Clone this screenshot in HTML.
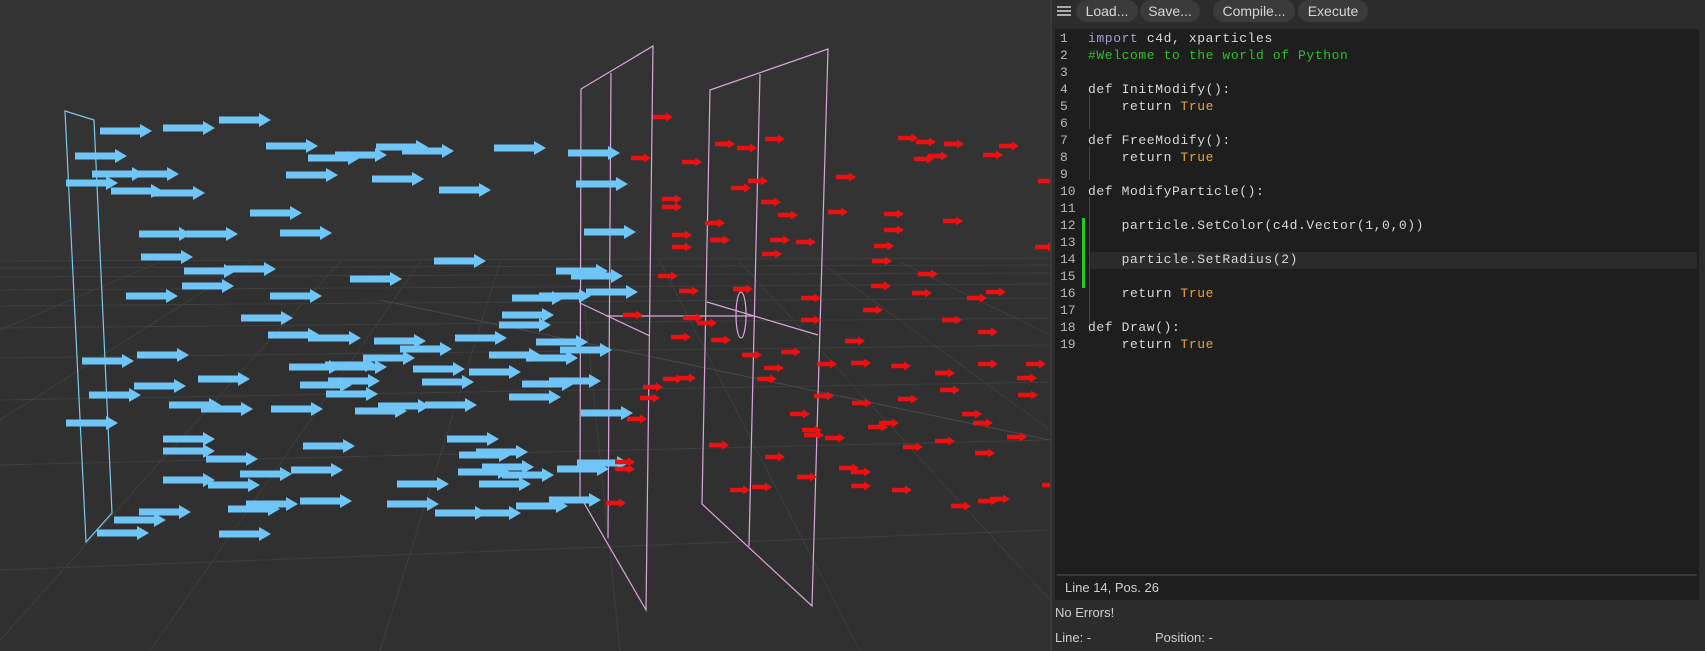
<!DOCTYPE html>
<html><head><meta charset="utf-8"><style>
html,body{margin:0;padding:0;width:1705px;height:651px;overflow:hidden;background:#2b2b2b;font-family:"Liberation Sans",sans-serif}
#vp{position:absolute;left:0;top:0;width:1050px;height:651px}
#ed{position:absolute;left:1050px;top:0;width:655px;height:651px;background:#2c2c2c;border-left:2px solid #3a3a3a;box-sizing:border-box}
.tb{position:absolute;top:0;height:22px;background:#3b3b3b;border-radius:11px;color:#d6d6d6;font-size:14px;line-height:22px;text-align:center}
.ham{position:absolute;left:5px;top:6px;width:14px;height:2px;background:#aaa;box-shadow:0 4px 0 #aaa,0 8px 0 #aaa}
#code{position:absolute;left:3px;top:29px;width:644px;height:571px;background:#1e1e1e}
.ln{position:absolute;left:5px;width:30px;color:#b8b8b8;font:13px/17px "Liberation Mono",monospace}
.cl{position:absolute;left:33px;white-space:pre;color:#d8d8d8;font:13px/17px "Liberation Mono",monospace;letter-spacing:0.6px}
.k{color:#a89bd8}.c{color:#2fbf2f}.t{color:#e8a13c}
</style></head><body>
<svg id="vp" width="1050" height="651" viewBox="0 0 1050 651">
<defs>
<path id="b" d="M0,-3.5H40V-7L52,0L40,7V3.5H0Z" fill="#6fc5f6"/>
<path id="r" d="M0,-2.2H13V-4.5L20,0L13,4.5V2.2H0Z" fill="#ee1010"/>
</defs>
<rect width="1050" height="651" fill="#333333"/>
<rect y="261" width="1050" height="390" fill="#303030"/>
<g stroke="#3e3e3e" stroke-width="1" fill="none">
<line x1="0" y1="261" x2="1050" y2="258"/>
<line x1="0" y1="268" x2="1050" y2="265"/>
<line x1="0" y1="277" x2="1050" y2="273"/>
<line x1="0" y1="290" x2="1050" y2="284"/>
<line x1="0" y1="306" x2="1050" y2="298"/>
<line x1="0" y1="328" x2="1050" y2="318"/>
<line x1="0" y1="358" x2="1050" y2="345"/>
<line x1="0" y1="400" x2="1050" y2="382"/>
<line x1="0" y1="465" x2="1050" y2="440"/>
<line x1="0" y1="570" x2="1050" y2="530"/>
<line x1="340" y1="262" x2="0" y2="640"/>
<line x1="420" y1="262" x2="150" y2="651"/>
<line x1="500" y1="262" x2="380" y2="651"/>
<line x1="580" y1="262" x2="620" y2="651"/>
<line x1="660" y1="262" x2="860" y2="651"/>
<line x1="740" y1="262" x2="1050" y2="600"/>
<line x1="820" y1="262" x2="1050" y2="430"/>
<line x1="250" y1="262" x2="0" y2="420"/>
<line x1="160" y1="262" x2="0" y2="330"/>
<line x1="900" y1="262" x2="1050" y2="335"/>
</g>
<line x1="380" y1="300" x2="1050" y2="440" stroke="#4a4a4a" stroke-width="1"/>
<g stroke="#7ac8ea" stroke-width="1.2" fill="none"><path d="M65,111L94,120L112,513L86,542Z"/></g>
<g stroke="#d9a6d9" stroke-width="1.2" fill="none">
<path d="M581,89L653,46L646,610L580,496Z"/><path d="M611,73L608,538"/><path d="M580,303L650,336"/>
<path d="M710,90L828,49L812,606L702,504Z"/><path d="M760,74L749,546"/><path d="M707,302L818,335"/>
<path d="M606,316H753"/><ellipse cx="741" cy="315" rx="5" ry="23"/>
</g>
<g>
<use href="#b" x="100" y="131"/><use href="#b" x="163" y="128"/><use href="#b" x="219" y="120"/><use href="#b" x="75" y="156"/><use href="#b" x="266" y="146"/><use href="#b" x="308" y="158"/><use href="#b" x="335" y="155"/><use href="#b" x="376" y="147"/><use href="#b" x="402" y="151"/><use href="#b" x="494" y="148"/><use href="#b" x="568" y="153"/><use href="#b" x="92" y="174"/><use href="#b" x="127" y="174"/><use href="#b" x="66" y="183"/><use href="#b" x="111" y="191"/><use href="#b" x="153" y="193"/><use href="#b" x="286" y="175"/><use href="#b" x="372" y="179"/><use href="#b" x="439" y="190"/><use href="#b" x="576" y="184"/><use href="#b" x="250" y="213"/><use href="#b" x="139" y="234"/><use href="#b" x="186" y="234"/><use href="#b" x="280" y="233"/><use href="#b" x="584" y="232"/><use href="#b" x="141" y="257"/><use href="#b" x="434" y="261"/><use href="#b" x="184" y="271"/><use href="#b" x="224" y="269"/><use href="#b" x="556" y="271"/><use href="#b" x="571" y="276"/><use href="#b" x="182" y="286"/><use href="#b" x="350" y="279"/><use href="#b" x="126" y="296"/><use href="#b" x="270" y="296"/><use href="#b" x="586" y="292"/><use href="#b" x="512" y="298"/><use href="#b" x="539" y="296"/><use href="#b" x="241" y="318"/><use href="#b" x="502" y="315"/><use href="#b" x="499" y="325"/><use href="#b" x="268" y="335"/><use href="#b" x="309" y="338"/><use href="#b" x="374" y="341"/><use href="#b" x="400" y="349"/><use href="#b" x="455" y="338"/><use href="#b" x="536" y="342"/><use href="#b" x="560" y="350"/><use href="#b" x="82" y="361"/><use href="#b" x="137" y="355"/><use href="#b" x="289" y="367"/><use href="#b" x="325" y="365"/><use href="#b" x="363" y="358"/><use href="#b" x="335" y="367"/><use href="#b" x="413" y="369"/><use href="#b" x="469" y="372"/><use href="#b" x="489" y="355"/><use href="#b" x="526" y="358"/><use href="#b" x="198" y="379"/><use href="#b" x="300" y="385"/><use href="#b" x="328" y="381"/><use href="#b" x="422" y="382"/><use href="#b" x="522" y="384"/><use href="#b" x="549" y="381"/><use href="#b" x="89" y="395"/><use href="#b" x="134" y="386"/><use href="#b" x="326" y="394"/><use href="#b" x="509" y="397"/><use href="#b" x="169" y="405"/><use href="#b" x="201" y="409"/><use href="#b" x="271" y="409"/><use href="#b" x="355" y="411"/><use href="#b" x="378" y="406"/><use href="#b" x="425" y="405"/><use href="#b" x="66" y="423"/><use href="#b" x="581" y="413"/><use href="#b" x="163" y="439"/><use href="#b" x="163" y="451"/><use href="#b" x="206" y="459"/><use href="#b" x="303" y="446"/><use href="#b" x="447" y="439"/><use href="#b" x="459" y="455"/><use href="#b" x="476" y="452"/><use href="#b" x="163" y="480"/><use href="#b" x="208" y="485"/><use href="#b" x="240" y="474"/><use href="#b" x="291" y="470"/><use href="#b" x="397" y="484"/><use href="#b" x="458" y="472"/><use href="#b" x="482" y="467"/><use href="#b" x="502" y="475"/><use href="#b" x="479" y="484"/><use href="#b" x="557" y="469"/><use href="#b" x="577" y="463"/><use href="#b" x="114" y="520"/><use href="#b" x="139" y="512"/><use href="#b" x="97" y="533"/><use href="#b" x="228" y="509"/><use href="#b" x="246" y="504"/><use href="#b" x="300" y="501"/><use href="#b" x="387" y="504"/><use href="#b" x="435" y="513"/><use href="#b" x="469" y="513"/><use href="#b" x="516" y="506"/><use href="#b" x="549" y="500"/><use href="#b" x="219" y="534"/>
</g>
<g>
<use href="#r" x="653" y="117"/><use href="#r" x="631" y="158"/><use href="#r" x="682" y="162"/><use href="#r" x="715" y="144"/><use href="#r" x="737" y="148"/><use href="#r" x="765" y="139"/><use href="#r" x="898" y="138"/><use href="#r" x="916" y="142"/><use href="#r" x="944" y="144"/><use href="#r" x="999" y="146"/><use href="#r" x="914" y="159"/><use href="#r" x="928" y="156"/><use href="#r" x="983" y="155"/><use href="#r" x="1038" y="181"/><use href="#r" x="748" y="181"/><use href="#r" x="731" y="188"/><use href="#r" x="836" y="177"/><use href="#r" x="662" y="199"/><use href="#r" x="662" y="207"/><use href="#r" x="761" y="202"/><use href="#r" x="778" y="215"/><use href="#r" x="828" y="212"/><use href="#r" x="884" y="214"/><use href="#r" x="943" y="221"/><use href="#r" x="705" y="223"/><use href="#r" x="672" y="235"/><use href="#r" x="672" y="247"/><use href="#r" x="710" y="240"/><use href="#r" x="770" y="240"/><use href="#r" x="796" y="242"/><use href="#r" x="884" y="230"/><use href="#r" x="762" y="254"/><use href="#r" x="874" y="246"/><use href="#r" x="1035" y="247"/><use href="#r" x="872" y="261"/><use href="#r" x="918" y="274"/><use href="#r" x="658" y="276"/><use href="#r" x="679" y="291"/><use href="#r" x="733" y="289"/><use href="#r" x="871" y="286"/><use href="#r" x="801" y="298"/><use href="#r" x="912" y="293"/><use href="#r" x="967" y="298"/><use href="#r" x="986" y="292"/><use href="#r" x="623" y="315"/><use href="#r" x="683" y="318"/><use href="#r" x="697" y="323"/><use href="#r" x="863" y="310"/><use href="#r" x="801" y="320"/><use href="#r" x="942" y="320"/><use href="#r" x="671" y="337"/><use href="#r" x="711" y="340"/><use href="#r" x="845" y="341"/><use href="#r" x="978" y="332"/><use href="#r" x="742" y="355"/><use href="#r" x="781" y="352"/><use href="#r" x="764" y="368"/><use href="#r" x="817" y="364"/><use href="#r" x="851" y="363"/><use href="#r" x="891" y="366"/><use href="#r" x="978" y="364"/><use href="#r" x="1026" y="364"/><use href="#r" x="935" y="373"/><use href="#r" x="663" y="379"/><use href="#r" x="676" y="378"/><use href="#r" x="757" y="379"/><use href="#r" x="1017" y="378"/><use href="#r" x="643" y="387"/><use href="#r" x="940" y="390"/><use href="#r" x="1018" y="395"/><use href="#r" x="640" y="398"/><use href="#r" x="814" y="396"/><use href="#r" x="852" y="403"/><use href="#r" x="898" y="399"/><use href="#r" x="627" y="419"/><use href="#r" x="790" y="414"/><use href="#r" x="868" y="427"/><use href="#r" x="879" y="423"/><use href="#r" x="962" y="414"/><use href="#r" x="973" y="423"/><use href="#r" x="802" y="430"/><use href="#r" x="804" y="435"/><use href="#r" x="825" y="438"/><use href="#r" x="903" y="447"/><use href="#r" x="935" y="441"/><use href="#r" x="1007" y="437"/><use href="#r" x="709" y="445"/><use href="#r" x="765" y="457"/><use href="#r" x="975" y="453"/><use href="#r" x="615" y="462"/><use href="#r" x="615" y="469"/><use href="#r" x="839" y="468"/><use href="#r" x="851" y="472"/><use href="#r" x="797" y="477"/><use href="#r" x="851" y="486"/><use href="#r" x="730" y="490"/><use href="#r" x="752" y="487"/><use href="#r" x="892" y="490"/><use href="#r" x="951" y="506"/><use href="#r" x="978" y="501"/><use href="#r" x="990" y="499"/><use href="#r" x="606" y="503"/><use href="#r" x="1042" y="485"/>
</g>
</svg>
<div id="ed">
<div class="ham"></div>
<div class="tb" style="left:24px;width:62px">Load...</div>
<div class="tb" style="left:88px;width:60px">Save...</div>
<div class="tb" style="left:161px;width:82px">Compile...</div>
<div class="tb" style="left:246px;width:70px">Execute</div>
<div id="code">
<div style="position:absolute;left:34px;top:223px;width:608px;height:17px;background:#2b2b2b"></div>
<div style="position:absolute;left:27px;top:189px;width:3px;height:70px;background:#22cc22"></div>
<div style="position:absolute;left:34px;top:66px;width:1px;height:34px;background:#444"></div>
<div style="position:absolute;left:34px;top:117px;width:1px;height:34px;background:#444"></div>
<div style="position:absolute;left:34px;top:168px;width:1px;height:136px;background:#444"></div>
<div class="ln" style="top:1px">1<br>2<br>3<br>4<br>5<br>6<br>7<br>8<br>9<br>10<br>11<br>12<br>13<br>14<br>15<br>16<br>17<br>18<br>19</div>
<div class="cl" style="top:1px"><span class="k">import</span> c4d, xparticles
<span class="c">#Welcome to the world of Python</span>

def InitModify():
    return <span class="t">True</span>

def FreeModify():
    return <span class="t">True</span>

def ModifyParticle():

    particle.SetColor(c4d.Vector(1,0,0))

    particle.SetRadius(2)

    return <span class="t">True</span>

def Draw():
    return <span class="t">True</span></div>
<div style="position:absolute;left:2px;top:545px;width:640px;height:2px;background:#3a3a3a"></div>
<div style="position:absolute;left:10px;top:550px;color:#cfcfcf;font-size:13px;line-height:18px">Line 14, Pos. 26</div>
</div>
<div style="position:absolute;left:3px;top:605px;color:#cfcfcf;font-size:13px">No Errors!</div>
<div style="position:absolute;left:3px;top:630px;color:#cfcfcf;font-size:13px">Line: -</div>
<div style="position:absolute;left:103px;top:630px;color:#cfcfcf;font-size:13px">Position: -</div>
</div>
</body></html>
